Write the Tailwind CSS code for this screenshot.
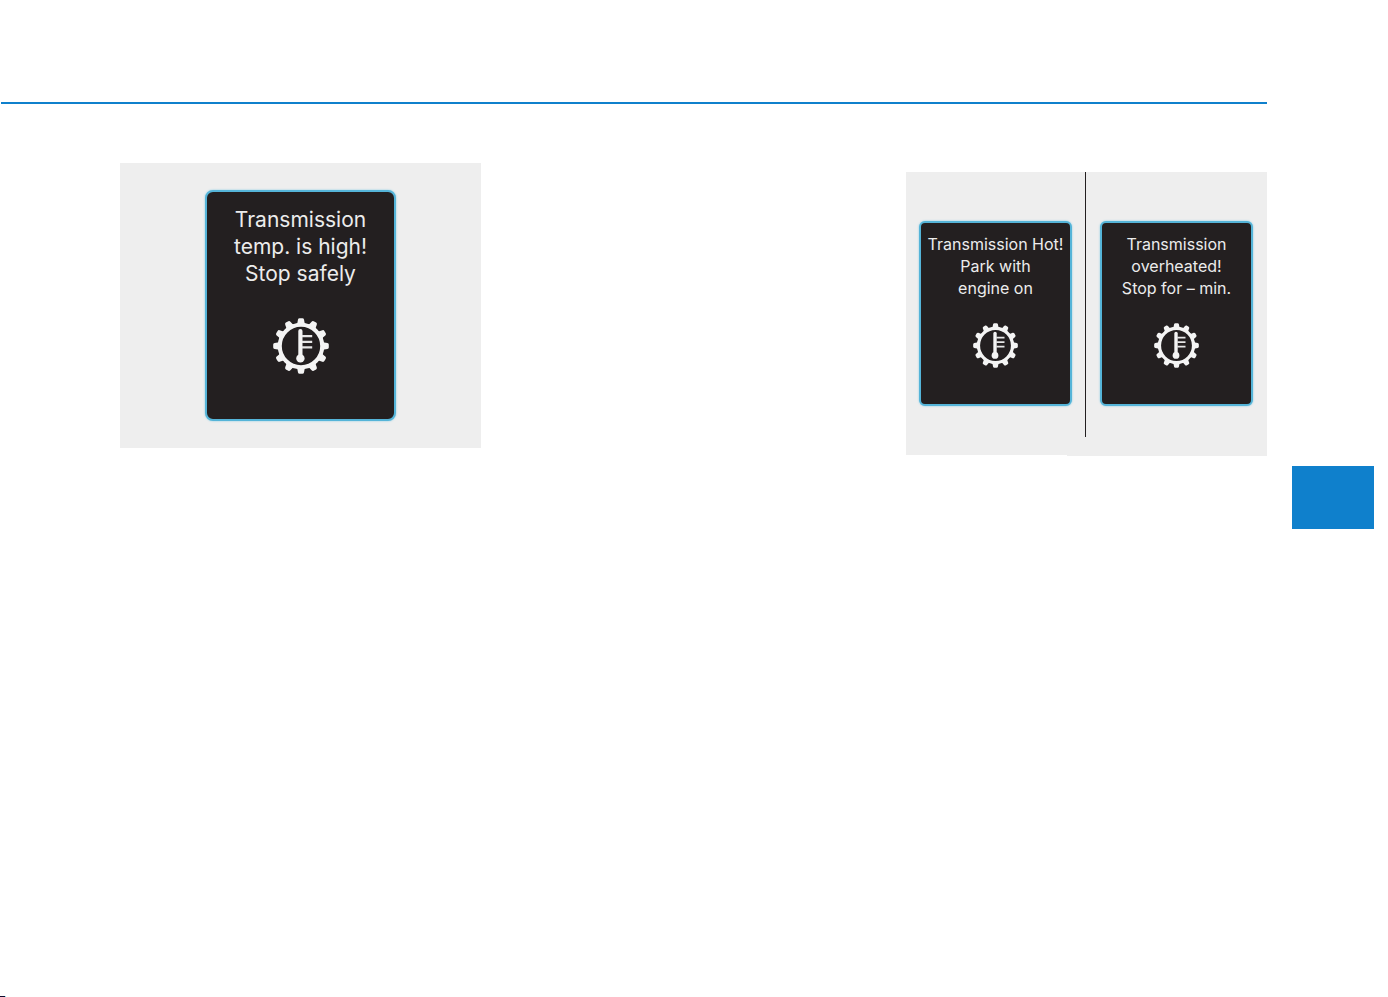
<!DOCTYPE html>
<html lang="en">
  <head>
    <meta charset="UTF-8" />
    <meta name="viewport" content="width=device-width, initial-scale=1.0" />
    <title>Transmission warnings</title>
    <script src="https://cdn.jsdelivr.net/npm/@tailwindcss/browser@4"></script>
  </head>
  <body class="bg-white min-h-screen flex flex-col font-['Inter','DejaVu_Sans',sans-serif] text-[#ececec]">
    <!-- Gear with thermometer, shared by all displays -->
    <svg class="hidden" aria-hidden="true">
      <symbol id="gear-temp" viewBox="0 0 56 56">
        <defs>
          <path id="tooth" d="M22.6 7 L24.4 4.8 L25 1.6 Q25.3 0.2 26.6 0.2 H29.4 Q30.7 0.2 31 1.6 L31.6 4.8 L33.4 7 Z" />
        </defs>
        <g fill="#f4f4f4">
          <use href="#tooth" />
          <use href="#tooth" transform="rotate(30 28 28)" />
          <use href="#tooth" transform="rotate(60 28 28)" />
          <use href="#tooth" transform="rotate(90 28 28)" />
          <use href="#tooth" transform="rotate(120 28 28)" />
          <use href="#tooth" transform="rotate(150 28 28)" />
          <use href="#tooth" transform="rotate(180 28 28)" />
          <use href="#tooth" transform="rotate(210 28 28)" />
          <use href="#tooth" transform="rotate(240 28 28)" />
          <use href="#tooth" transform="rotate(270 28 28)" />
          <use href="#tooth" transform="rotate(300 28 28)" />
          <use href="#tooth" transform="rotate(330 28 28)" />
          <circle cx="27.4" cy="40.4" r="4.2" />
        </g>
        <circle cx="28" cy="28" r="21.2" fill="none" stroke="#f4f4f4" stroke-width="4" />
        <path d="M27.4 13 V40" fill="none" stroke="#f4f4f4" stroke-width="4.2" stroke-linecap="round" />
        <path d="M29 18.2 H39.2 M29 23.8 H39.2 M29 29.4 H39.2" fill="none" stroke="#e6e6e6" stroke-width="2.2" />
      </symbol>
    </svg>

    <div class="flex-1 flex">
      <main class="flex-1 pt-[102px]">
        <hr class="ml-px h-[2px] border-0 bg-[#0f80cc]" />
        <div class="flex justify-between items-start pl-[120px] pt-[59px]">
          <figure class="w-[361px] bg-[#eeeeee] pt-[27px] pb-[27px] flex justify-center">
            <div class="w-[191px] h-[231px] rounded-lg border-2 border-[#55b4d8] bg-[#231f20] shadow-[0_0_2px_#7cc9e4] pt-[14px] flex flex-col items-center">
              <p class="text-center text-[21px] leading-[27px] whitespace-nowrap">Transmission<br />temp. is high!<br />Stop safely</p>
              <svg class="mt-[31px] size-[56px]" role="img" aria-label="Transmission temperature"><use href="#gear-temp" /></svg>
            </div>
          </figure>

          <figure class="w-[361px] mt-[9px]">
            <div class="h-[283px] bg-[#eeeeee] flex">
              <div class="w-[179px] pt-[49px] flex justify-center items-start">
                <div class="w-[153px] h-[185px] rounded-md border-2 border-[#55b4d8] bg-[#231f20] shadow-[0_0_2px_#7cc9e4] pt-[10px] flex flex-col items-center">
                  <p class="text-center text-[16px] leading-[22px] whitespace-nowrap">Transmission Hot!<br />Park with<br />engine on</p>
                  <svg class="mt-[24px] size-[45px]" role="img" aria-label="Transmission temperature"><use href="#gear-temp" /></svg>
                </div>
              </div>
              <div class="w-px h-[265px] bg-[#231f20]"></div>
              <div class="flex-1 pt-[49px] flex justify-center items-start">
                <div class="w-[153px] h-[185px] rounded-md border-2 border-[#55b4d8] bg-[#231f20] shadow-[0_0_2px_#7cc9e4] pt-[10px] flex flex-col items-center">
                  <p class="text-center text-[16px] leading-[22px] whitespace-nowrap">Transmission<br />overheated!<br />Stop for – min.</p>
                  <svg class="mt-[24px] size-[45px]" role="img" aria-label="Transmission temperature"><use href="#gear-temp" /></svg>
                </div>
              </div>
            </div>
            <div class="ml-[161px] h-px bg-[#eeeeee]"></div>
          </figure>
        </div>
      </main>

      <!-- Chapter tab -->
      <aside class="w-[121px] pl-[25px] pt-[466px]">
        <div class="w-[82px] h-[63px] bg-[#0f80cc]"></div>
      </aside>
    </div>

    <footer class="h-px flex">
      <div class="w-[5px] bg-[#120a2c]"></div>
      <div class="w-px bg-[#7fe8f5]"></div>
    </footer>
  </body>
</html>
